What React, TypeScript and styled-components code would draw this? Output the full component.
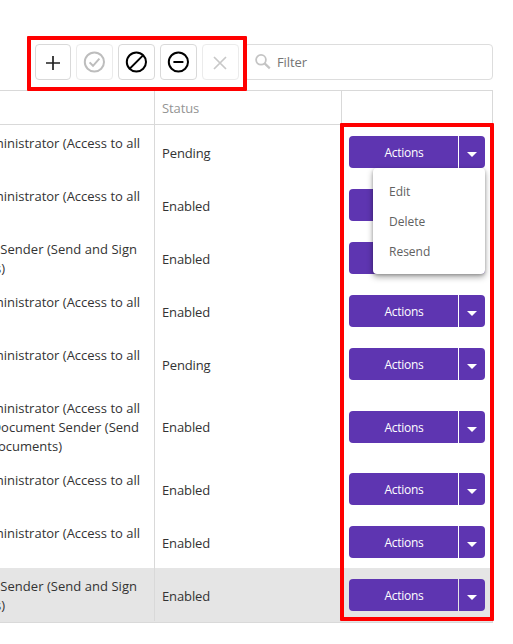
import React from "react";
import styled, { createGlobalStyle } from "styled-components";

const GlobalStyle = createGlobalStyle`
  * { box-sizing: border-box; }
  body { margin: 0; background: #fff; overflow: hidden; }
  button { font: inherit; padding: 0; margin: 0; }
`;

const Page = styled.main`
  position: relative;
  width: 513px;
  height: 644px;
  overflow: hidden;
  background: #fff;
  color: #333;
  font-family: "Open Sans", "Noto Sans", sans-serif;
  font-size: 13px;
`;

const Toolbar = styled.header`
  display: flex;
  height: 90px;
  padding: 44px 20px 10px 35px;
`;

const ToolButton = styled.button<{ $width?: number; $disabled?: boolean }>`
  display: flex;
  align-items: center;
  justify-content: flex-start;
  flex: none;
  width: ${(p) => p.$width ?? 37}px;
  height: 36px;
  margin-right: 5px;
  padding-left: 5px;
  border: 1px solid ${(p) => (p.$disabled ? "#ebebeb" : "#d9d9d9")};
  border-radius: 4px;
  background: #fff;
  color: ${(p) => (p.$disabled ? "#bdbdbd" : "#000")};
`;

const FilterBox = styled.label`
  display: flex;
  align-items: center;
  flex: 1;
  height: 36px;
  padding-left: 10px;
  border: 1px solid #dddddd;
  border-radius: 4px;
  color: #757575;
`;

const FilterText = styled.span`
  margin-left: 6px;
  letter-spacing: -0.1px;
`;

const Table = styled.section`
  width: 493px;
  border: solid #d9d9d9;
  border-width: 1px 1px 1px 0;
`;

const Row = styled.div<{ $height: number; $selected?: boolean }>`
  display: grid;
  grid-template-columns: 154px 187px 1fr;
  height: ${(p) => p.$height}px;
  padding-bottom: ${(p) => (p.$selected ? 1 : 0)}px;
  background: ${(p) => (p.$selected ? "#e5e5e5" : "#fff")};
`;

const HeaderRow = styled(Row)`
  border-bottom: 1px solid #d9d9d9;
  color: #949494;
`;

const RoleCell = styled.div`
  padding-top: 9px;
  overflow: hidden;
`;

const RoleLine = styled.div<{ $end: number; $spacing?: number }>`
  display: flex;
  justify-content: flex-end;
  width: ${(p) => p.$end}px;
  height: 19px;
  line-height: 19px;
  white-space: nowrap;
  letter-spacing: ${(p) => p.$spacing ?? 0}px;
`;

const StatusCell = styled.div`
  display: flex;
  align-items: center;
  padding: 2px 0 0 7px;
  border-left: 1px solid #d9d9d9;
  letter-spacing: -0.12px;
`;

const HeaderCell = styled(StatusCell)`
  padding-top: 0;
`;

const ActionCell = styled.div<{ $top?: number }>`
  padding: ${(p) => p.$top ?? 11}px 0 0 7px;
  border-left: 1px solid #d9d9d9;
`;

const SplitButton = styled.div`
  position: relative;
  display: flex;
  gap: 1px;
  width: 136px;
  height: 32px;
`;

const MainAction = styled.button`
  width: 109px;
  padding: 1px 0 0 1px;
  border: 0;
  border-radius: 4px 0 0 4px;
  background: #5e35b1;
  color: #fff;
  font-size: 12px;
  letter-spacing: -0.25px;
`;

const CaretButton = styled.button`
  display: flex;
  justify-content: center;
  width: 26px;
  padding-top: 16px;
  border: 0;
  border-radius: 0 4px 4px 0;
  background: #5e35b1;
`;

const Menu = styled.div`
  position: absolute;
  z-index: 2;
  top: 32px;
  right: 0;
  width: 112px;
  padding: 8px 0;
  border-radius: 4px;
  background: #fff;
  box-shadow: 0 3px 6px rgba(0, 0, 0, 0.35), 0 1px 3px rgba(0, 0, 0, 0.2);
`;

const MenuItem = styled.div`
  height: 30px;
  padding-left: 16px;
  line-height: 31px;
  color: #616161;
  font-size: 12px;
`;

const Highlight = styled.div<{ $x: number; $y: number; $w: number; $h: number }>`
  position: absolute;
  z-index: 3;
  left: ${(p) => p.$x}px;
  top: ${(p) => p.$y}px;
  width: ${(p) => p.$w}px;
  height: ${(p) => p.$h}px;
  border: 4px solid #ff0000;
  border-radius: 1px;
  pointer-events: none;
`;

type Line = { text: string; end: number; spacing?: number };

const admin: Line = { text: "Administrator (Access to all", end: 140 };
const sender: Line[] = [
  { text: "Sender (Send and Sign", end: 137, spacing: 0.04 },
  { text: "s)", end: 5 },
];

const rows: { lines: Line[]; status: string; height: number }[] = [
  { lines: [admin], status: "Pending", height: 53 },
  { lines: [admin], status: "Enabled", height: 53 },
  { lines: sender, status: "Enabled", height: 53 },
  { lines: [admin], status: "Enabled", height: 53 },
  { lines: [admin], status: "Pending", height: 53 },
  {
    lines: [
      admin,
      { text: "Document Sender (Send", end: 139 },
      { text: "Documents)", end: 62 },
    ],
    status: "Enabled",
    height: 72,
  },
  { lines: [admin], status: "Enabled", height: 53 },
  { lines: [admin], status: "Enabled", height: 53 },
  { lines: sender, status: "Enabled", height: 54 },
];

const Glyph = ({ children }: { children: React.ReactNode }) => (
  <svg width="24" height="24" viewBox="0 0 24 24" fill="none" stroke="currentColor" strokeWidth="2">
    {children}
  </svg>
);

export default function App() {
  return (
    <>
      <GlobalStyle />
      <Page>
        <Toolbar>
          <ToolButton $width={36} aria-label="Add">
            <Glyph><path d="M5 13H19M12 6V20" stroke="#222" strokeWidth="1.7" /></Glyph>
          </ToolButton>
          <ToolButton $disabled aria-label="Enable">
            <Glyph><circle cx="12.4" cy="12" r="9.6" /><path d="M7.6 12.4L11 15.8L17.4 8.6" /></Glyph>
          </ToolButton>
          <ToolButton aria-label="Block">
            <Glyph><circle cx="12.4" cy="12" r="9.6" /><path d="M5.8 18.6L19 5.4" /></Glyph>
          </ToolButton>
          <ToolButton aria-label="Disable">
            <Glyph><circle cx="12.4" cy="12" r="9.6" /><path d="M7.4 12H17.4" /></Glyph>
          </ToolButton>
          <ToolButton $disabled aria-label="Delete">
            <Glyph><path d="M6 7L18 19M18 7L6 19" stroke="#c8c8c8" strokeWidth="1.7" /></Glyph>
          </ToolButton>
          <FilterBox>
            <svg width="16" height="16" viewBox="0 0 16 16" fill="none" stroke="#c4c4c4">
              <circle cx="6" cy="5.8" r="4.9" strokeWidth="1.8" />
              <path d="M9.6 9.4L14.8 14.4" strokeWidth="2.2" />
            </svg>
            <FilterText>Filter</FilterText>
          </FilterBox>
        </Toolbar>
        <Table>
          <HeaderRow $height={34}>
            <div />
            <HeaderCell>Status</HeaderCell>
            <ActionCell />
          </HeaderRow>
          {rows.map((row, i) => (
            <Row key={i} $height={row.height} $selected={i === rows.length - 1}>
              <RoleCell>
                {row.lines.map((line) => (
                  <RoleLine key={line.text} $end={line.end} $spacing={line.spacing}>
                    {line.text}
                  </RoleLine>
                ))}
              </RoleCell>
              <StatusCell>{row.status}</StatusCell>
              <ActionCell $top={row.height > 54 ? 21 : 11}>
                <SplitButton>
                  <MainAction>Actions</MainAction>
                  <CaretButton aria-label="More actions">
                    <svg width="10" height="5" viewBox="0 0 10 5">
                      <path d="M0 0H10L5 5Z" fill="#fff" />
                    </svg>
                  </CaretButton>
                  {i === 0 && (
                    <Menu>
                      <MenuItem>Edit</MenuItem>
                      <MenuItem>Delete</MenuItem>
                      <MenuItem>Resend</MenuItem>
                    </Menu>
                  )}
                </SplitButton>
              </ActionCell>
            </Row>
          ))}
        </Table>
        <Highlight $x={27} $y={36} $w={220} $h={55} />
        <Highlight $x={340} $y={123} $w={154} $h={498} />
      </Page>
    </>
  );
}
